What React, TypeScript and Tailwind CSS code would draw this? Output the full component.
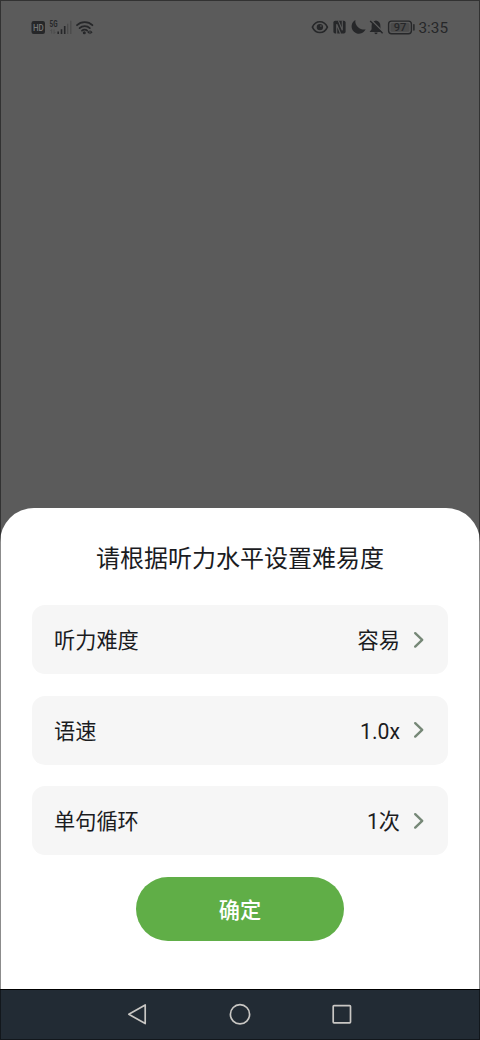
import React from 'react';

const settings = [
  { id: 'level', label: '听力难度', value: '容易' },
  { id: 'speed', label: '语速', value: '1.0x' },
  { id: 'loop', label: '单句循环', value: '1次' },
];

const StatusBar: React.FC = () => (
  <div className="flex h-[54px] items-center justify-between pr-[31px] pl-[31px] text-[#262729]">
    <div className="flex items-center">
      <svg width="66" height="20" viewBox="0 0 66 20" fill="none">
        <rect x="0.5" y="4" width="13.5" height="13" rx="2.2" fill="currentColor" />
        <text x="1.9" y="14.1" fontSize="9.5" fontWeight="500" textLength="10.8" lengthAdjust="spacingAndGlyphs" fill="#777777" fontFamily="Roboto, sans-serif">HD</text>
        <text x="18.5" y="9.8" fontSize="8.5" fontWeight="700" textLength="8" lengthAdjust="spacingAndGlyphs" fill="currentColor" fontFamily="Roboto, sans-serif">5G</text>
        <path d="M20.7 16.5v-4l-1.6 1.6M23 12.5v4l1.6-1.6" stroke="#4a4a4a" strokeWidth="0.8" />
        <path d="M27.2 14.5V17M30.5 12.3V17M33.7 9V17" stroke="currentColor" strokeWidth="1.6" />
        <path d="M36.7 6.8V17M39.8 3.8V17" stroke="#4a4a4a" strokeWidth="1.3" />
        <path d="M46 8.2c4-4.2 11.4-4.2 15.4 0M48.6 11.1c2.7-2.7 7.5-2.7 10.2 0M51 13.7c1.5-1.4 3.8-1.4 5.2 0" stroke="currentColor" strokeWidth="1.8" strokeLinecap="round" />
        <circle cx="53.3" cy="15.8" r="1.5" fill="currentColor" />
        <path d="M56.3 15.2l2.3-2v4zM61.6 15.2l-2.3-2v4z" fill="currentColor" />
      </svg>
    </div>
    <div className="flex items-center">
      <svg width="104" height="20" viewBox="0 0 104 20" fill="none">
        {/* eye comfort */}
        <path d="M1.4 10.1c3.3-7.2 11.7-7.2 15 0-3.3 7.2-11.7 7.2-15 0z" stroke="currentColor" strokeWidth="1.6" />
        <circle cx="8.9" cy="10.1" r="3.2" fill="currentColor" />
        <circle cx="9.9" cy="9" r="0.8" fill="#5b5b5b" />
        {/* nfc */}
        <rect x="22.4" y="3.8" width="12.2" height="12.8" rx="1.8" fill="currentColor" />
        <path d="M25.7 17V7.2l3.9 9.6M31.3 3.4v9.8l-3.9-9.6" stroke="#5b5b5b" strokeWidth="1.1" />
        {/* do not disturb */}
        <path d="M44.4 3A7.3 7.3 0 1 0 54.6 12.3 8.4 8.4 0 0 1 44.4 3z" fill="currentColor" />
        {/* muted */}
        <path d="M65 3.6c-3.2.7-4.4 2.7-4.4 5.3v3.4l-2 2.6h12.8l-2-2.6V8.9c0-2.6-1.2-4.6-4.4-5.3zM63.4 15.6h3.2a1.6 1.6 0 0 1-3.2 0z" fill="currentColor" />
        <path d="M60.2 3.1l12.4 12.4" stroke="#5b5b5b" strokeWidth="1.5" />
        <path d="M59.2 3.9l12.4 12.4" stroke="currentColor" strokeWidth="1.4" />
        {/* battery */}
        <rect x="77.6" y="4.1" width="22.8" height="12.6" rx="3" stroke="currentColor" strokeWidth="1.4" />
        <rect x="79.5" y="6" width="19" height="8.8" rx="1.5" fill="#4b4b4b" />
        <path d="M102.9 7.8v5.2" stroke="currentColor" strokeWidth="1.5" strokeLinecap="round" />
        <text x="89" y="14.4" fontSize="11" fontWeight="500" textLength="12.6" lengthAdjust="spacingAndGlyphs" textAnchor="middle" fill="currentColor" fontFamily="Roboto, sans-serif">97</text>
      </svg>
      <span className="mt-px mr-px ml-1 text-[15.3px] leading-5">3:35</span>
    </div>
  </div>
);

const NavBar: React.FC = () => (
  <div className="flex h-[51px] items-center justify-center gap-[78px] border-t border-black bg-[#222b34]">
    <svg width="24" height="24" viewBox="0 0 24 24" fill="none" stroke="#c9c7c4" strokeWidth="1.7" strokeLinejoin="round">
      <path d="M19.2 2v18.6L2.8 11.3z" />
    </svg>
    <svg width="24" height="24" viewBox="0 0 24 24" fill="none" stroke="#c9c7c4" strokeWidth="1.7">
      <circle cx="12" cy="11.3" r="9.6" />
    </svg>
    <svg width="24" height="24" viewBox="0 0 24 24" fill="none" stroke="#c9c7c4" strokeWidth="1.7">
      <rect x="3.2" y="2.6" width="17.3" height="17.3" rx="0.8" />
    </svg>
  </div>
);

const App: React.FC = () => {
  return (
    <div className="relative flex h-[1040px] w-[480px] flex-col overflow-hidden bg-[#5b5b5b] font-[Roboto,'Noto_Sans_CJK_SC',sans-serif] text-[#1b1c1f]">
      <StatusBar />

      {/* Bottom sheet */}
      <div className="mt-auto flex h-[481px] flex-col items-center rounded-t-[34px] bg-white px-8 pt-[33px]">
        <h1 className="text-2xl leading-9">请根据听力水平设置难易度</h1>

        <div className="mt-7 flex w-full flex-col gap-[21.7px]">
          {settings.map((item) => (
            <button
              key={item.id}
              className="flex h-[69px] w-full items-center justify-between rounded-[13px] bg-[#f6f6f6] pr-[23px] pl-[22px] text-[21.2px] leading-8"
            >
              <span className="pt-[3px]">{item.label}</span>
              <span className="flex items-center gap-[13px]">
                <span className="pt-[3px]">{item.value}</span>
                <svg width="12" height="18" viewBox="0 0 12 18" fill="none" stroke="#768877" strokeWidth="2.4" strokeLinecap="round" strokeLinejoin="round">
                  <path d="M2.2 2.2l7 6.7-7 6.7" />
                </svg>
              </span>
            </button>
          ))}
        </div>

        <button className="mt-[22px] h-16 w-52 rounded-full bg-[#60ae47] pt-[3px] text-[21.2px] font-medium text-white">
          确定
        </button>
      </div>

      <NavBar />

      {/* Screen edge */}
      <div className="pointer-events-none absolute inset-0 border border-black/45" />
    </div>
  );
};

export default App;
